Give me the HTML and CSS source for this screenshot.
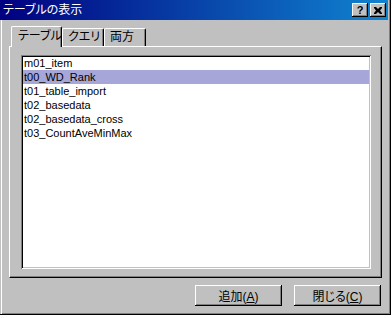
FILE: index.html
```html
<!DOCTYPE html>
<html>
  <head>
    <meta charset="UTF-8" />
    <title>テーブルの表示</title>
    <link rel="stylesheet" href="styles.css">
  </head>

  <body>
    <div class="window">
      <div class="titlebar">
        <span class="title">テーブルの表示</span>
        <div class="title-buttons">
          <button class="title-btn help" type="button">?</button>
          <button class="title-btn close" type="button">
            <svg width="8" height="7" viewBox="0 0 8 7">
              <path d="M0 0h2l2 2 2-2h2v1l-2 2.5 2 2.5v1h-2l-2-2-2 2h-2v-1l2-2.5-2-2.5z" fill="#000" />
            </svg>
          </button>
        </div>
      </div>

      <div class="content">
        <div class="tabs">
          <div class="tab active">テーブル</div>
          <div class="tab">クエリ</div>
          <div class="tab">両方</div>
        </div>

        <div class="panel">
          <ul class="listbox">
            <li>m01_item</li>
            <li class="selected">t00_WD_Rank</li>
            <li>t01_table_import</li>
            <li>t02_basedata</li>
            <li>t02_basedata_cross</li>
            <li>t03_CountAveMinMax</li>
          </ul>
        </div>

        <div class="actions">
          <button class="btn" type="button">追加(<u>A</u>)</button>
          <button class="btn" type="button">閉じる(<u>C</u>)</button>
        </div>
      </div>
    </div>
  </body>
</html>
```

FILE: styles.css
```css
* {
  box-sizing: border-box;
}

body {
  margin: 0;
  background-color: #fff;
  font-family: "Liberation Sans", "Noto Sans CJK JP", sans-serif;
  font-size: 12px;
  font-feature-settings: "palt";
  color: #000;
}

.window {
  width: 391px;
  height: 315px;
  background-color: #c0c0c0;
  box-shadow: inset -1px -1px #000, inset 1px 0 #c0c0c0, inset 2px 0 #fff,
    inset -2px -2px #808080;
  display: flex;
  flex-direction: column;
}

.titlebar {
  height: 20px;
  margin-right: 3px;
  background: linear-gradient(to right, #000080, #1084d0);
  display: flex;
  align-items: center;
  justify-content: space-between;
  padding: 0 2px 0 3px;
}

.title {
  color: #fff;
  font-size: 12px;
  line-height: 16px;
}

.title-buttons {
  display: flex;
  gap: 2px;
}

.title-btn {
  width: 16px;
  height: 14px;
  padding: 0;
  border: none;
  background-color: #c0c0c0;
  box-shadow: inset -1px -1px #000, inset 1px 1px #fff, inset -2px -2px #808080;
  display: flex;
  align-items: center;
  justify-content: center;
  font-family: "Liberation Sans", sans-serif;
  font-weight: bold;
  font-size: 11px;
  line-height: 12px;
}

.content {
  flex: 1;
  display: flex;
  flex-direction: column;
  padding: 6px 9px 0 9px;
}

.tabs {
  height: 20px;
  display: flex;
  align-items: flex-end;
  padding-left: 2px;
}

.tab {
  height: 18px;
  width: 42px;
  border-top: 1px solid #fff;
  border-left: 1px solid #fff;
  border-right: 1px solid #000;
  border-radius: 2px 2px 0 0;
  box-shadow: inset -1px 0 #808080;
  padding-left: 5px;
  line-height: 16px;
  white-space: nowrap;
}

.tab.active {
  width: 51px;
  height: 21px;
  margin-bottom: -1px;
  position: relative;
  background-color: #c0c0c0;
  padding-left: 6px;
  line-height: 19px;
}

.panel {
  height: 232px;
  border-top: 1px solid #fff;
  border-left: 1px solid #fff;
  border-right: 1px solid #000;
  border-bottom: 1px solid #000;
  box-shadow: inset -1px -1px #808080;
  padding: 8px 10px 8px 11px;
  display: flex;
  flex-direction: column;
}

.listbox {
  flex: 1;
  margin: 0;
  list-style: none;
  background-color: #fff;
  padding: 1px 2px 2px 2px;
  box-shadow: inset 1px 1px #808080, inset -1px -1px #fff, inset 2px 2px #000,
    inset -2px -2px #c0c0c0;
  font-size: 11px;
}

.listbox li {
  height: 14px;
  line-height: 14px;
  padding-left: 1px;
}

.listbox li.selected {
  background-color: #a6a6d8;
}

.actions {
  margin-top: 7px;
  display: flex;
  justify-content: flex-end;
  gap: 12px;
  padding-right: 1px;
}

.btn {
  width: 87px;
  height: 21px;
  padding: 0;
  border: none;
  background-color: #c0c0c0;
  box-shadow: inset -1px -1px #000, inset 1px 1px #fff, inset -2px -2px #808080;
  font-family: "Liberation Sans", "Noto Sans CJK JP", sans-serif;
  font-feature-settings: "palt";
  font-size: 12px;
  color: #000;
}
```
